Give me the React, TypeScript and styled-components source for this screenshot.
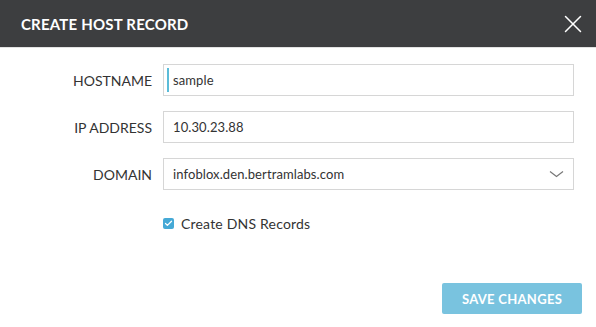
import React from 'react'
import styled, { createGlobalStyle } from 'styled-components'
import { X, Check } from 'lucide-react'

const GlobalStyle = createGlobalStyle`
  html, body {
    margin: 0;
    padding: 0;
    background: #fff;
  }
  body {
    font-family: Lato, 'Open Sans', sans-serif;
  }
`

const Modal = styled.div`
  width: 596px;
  height: 327px;
  display: flex;
  flex-direction: column;
  background: #fff;
`

const Header = styled.header`
  height: 48px;
  background: #3d3e40;
  display: flex;
  align-items: center;
  justify-content: space-between;
  padding: 0 8px 0 21px;
  box-sizing: border-box;
  border-bottom: 1px solid #e2e2e2;
`

const Title = styled.h1`
  margin: 0;
  color: #fff;
  font-size: 15px;
  font-weight: 700;
  letter-spacing: 0.2px;
`

const CloseButton = styled.button`
  background: none;
  border: none;
  padding: 0;
  color: #fff;
  display: flex;
  cursor: pointer;
`

const Form = styled.div`
  display: grid;
  grid-template-columns: 152px 1fr;
  column-gap: 11px;
  row-gap: 15px;
  padding: 16px 22px 0 0;
  align-items: center;
`

const Label = styled.label`
  text-align: right;
  font-size: 14px;
  color: #333;
`

const Field = styled.div`
  position: relative;
  height: 32px;
  box-sizing: border-box;
  border: 1px solid #d6d6d6;
  display: flex;
  align-items: center;
  padding: 0 9px;
  font-size: 13px;
  letter-spacing: 0.1px;
  color: #333;
`

const Caret = styled.span`
  position: absolute;
  left: 3px;
  top: 3px;
  bottom: 3px;
  width: 2px;
  background: #5bbcd9;
`

const SelectArrow = styled.svg`
  margin-left: auto;
  margin-right: 0;
  display: block;
`

const CheckRow = styled.div`
  grid-column: 2;
  display: flex;
  align-items: center;
  gap: 7px;
  margin-top: 10px;
  font-size: 14px;
  letter-spacing: 0.2px;
  color: #333;
`

const CheckBox = styled.span`
  width: 11px;
  height: 11px;
  border-radius: 2px;
  background: #45a9d6;
  display: flex;
  align-items: center;
  justify-content: center;
  color: #fff;
`

const Footer = styled.footer`
  margin-top: auto;
  display: flex;
  justify-content: flex-end;
  padding: 0 14px 13px 0;
`

const SaveButton = styled.button`
  width: 140px;
  height: 31px;
  border: none;
  border-radius: 2px;
  background: #79c3df;
  color: #fff;
  font-family: Lato, 'Open Sans', sans-serif;
  font-weight: 700;
  font-size: 13px;
  letter-spacing: 0.3px;
  cursor: pointer;
`

export default function App() {
  return (
    <Modal>
      <GlobalStyle />
      <Header>
        <Title>CREATE HOST RECORD</Title>
        <CloseButton aria-label="Close">
          <X size={30} strokeWidth={1.2} />
        </CloseButton>
      </Header>

      <Form>
        <Label>HOSTNAME</Label>
        <Field>
          <Caret />
          sample
        </Field>

        <Label>IP ADDRESS</Label>
        <Field>10.30.23.88</Field>

        <Label>DOMAIN</Label>
        <Field>
          infoblox.den.bertramlabs.com
          <SelectArrow width="15" height="8" viewBox="0 0 15 8">
            <polyline points="1,1.5 7.5,6.5 14,1.5" fill="none" stroke="#777" strokeWidth="1.2" />
          </SelectArrow>
        </Field>

        <CheckRow>
          <CheckBox>
            <Check size={9} strokeWidth={3.5} />
          </CheckBox>
          Create DNS Records
        </CheckRow>
      </Form>

      <Footer>
        <SaveButton>SAVE CHANGES</SaveButton>
      </Footer>
    </Modal>
  )
}
